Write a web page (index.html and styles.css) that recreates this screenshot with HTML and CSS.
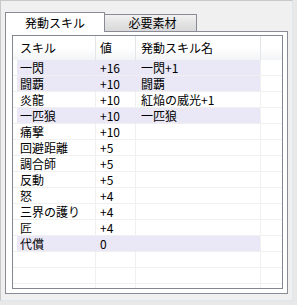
FILE: index.html
```html
<!DOCTYPE html>
<html lang="ja">
<head>
    <meta charset="UTF-8">
    <title>スキル</title>
    <link rel="stylesheet" href="styles.css">
</head>
<body>
    <div class="frame">
        <div class="tabs">
            <div class="tab active">発動スキル</div>
            <div class="tab">必要素材</div>
        </div>
        <div class="panel">
            <div class="list">
                <div class="head">
                    <div class="hc c1">スキル</div>
                    <div class="hc c2">値</div>
                    <div class="hc c3">発動スキル名</div>
                    <div class="hc fill"></div>
                </div>
                <div class="row on"><div class="pad"></div><div class="c c1">一閃</div><div class="c c2">+16</div><div class="c c3">一閃+1</div><div class="c fill"></div></div>
                <div class="row on"><div class="pad"></div><div class="c c1">闘覇</div><div class="c c2">+10</div><div class="c c3">闘覇</div><div class="c fill"></div></div>
                <div class="row"><div class="pad"></div><div class="c c1">炎龍</div><div class="c c2">+10</div><div class="c c3">紅焔の威光+1</div><div class="c fill"></div></div>
                <div class="row on"><div class="pad"></div><div class="c c1">一匹狼</div><div class="c c2">+10</div><div class="c c3">一匹狼</div><div class="c fill"></div></div>
                <div class="row"><div class="pad"></div><div class="c c1">痛撃</div><div class="c c2">+10</div><div class="c c3"></div><div class="c fill"></div></div>
                <div class="row"><div class="pad"></div><div class="c c1">回避距離</div><div class="c c2">+5</div><div class="c c3"></div><div class="c fill"></div></div>
                <div class="row"><div class="pad"></div><div class="c c1">調合師</div><div class="c c2">+5</div><div class="c c3"></div><div class="c fill"></div></div>
                <div class="row"><div class="pad"></div><div class="c c1">反動</div><div class="c c2">+5</div><div class="c c3"></div><div class="c fill"></div></div>
                <div class="row"><div class="pad"></div><div class="c c1">怒</div><div class="c c2">+4</div><div class="c c3"></div><div class="c fill"></div></div>
                <div class="row"><div class="pad"></div><div class="c c1">三界の護り</div><div class="c c2">+4</div><div class="c c3"></div><div class="c fill"></div></div>
                <div class="row"><div class="pad"></div><div class="c c1">匠</div><div class="c c2">+4</div><div class="c c3"></div><div class="c fill"></div></div>
                <div class="row on"><div class="pad"></div><div class="c c1">代償</div><div class="c c2">0</div><div class="c c3"></div><div class="c fill"></div></div>
                <div class="row"><div class="pad"></div><div class="c c1"></div><div class="c c2"></div><div class="c c3"></div><div class="c fill"></div></div>
                <div class="row"><div class="pad"></div><div class="c c1"></div><div class="c c2"></div><div class="c c3"></div><div class="c fill"></div></div>
                <div class="row"><div class="pad"></div><div class="c c1"></div><div class="c c2"></div><div class="c c3"></div><div class="c fill"></div></div>
            </div>
        </div>
    </div>
</body>
</html>
```

FILE: styles.css
```css
body {
    margin: 0;
    background-color: #e8e8e8;
    font-family: "Noto Sans CJK JP", "DejaVu Sans", sans-serif;
    font-size: 12px;
    color: #000;
}
.frame {
    box-sizing: border-box;
    width: 293px;
    height: 301px;
    padding: 11px 0 0 4px;
    background-color: #f0f0f0;
    border-top: 1px solid #c8c8c8;
    border-left: 1px solid #c8c8c8;
    border-right: 1px solid #dfe6ee;
    border-bottom: 1px solid #dfe6ee;
    overflow: hidden;
}
.tabs {
    display: flex;
    align-items: flex-end;
    height: 19px;
}
.tab {
    box-sizing: border-box;
    height: 17px;
    width: 93px;
    margin-left: -1px;
    border: 1px solid #898c95;
    border-bottom: none;
    background: linear-gradient(#f2f2f2, #e3e3e3 50%, #d9d9d9);
    text-align: center;
    line-height: 16px;
    padding-left: 4px;
}
.tab.active {
    position: relative;
    z-index: 1;
    height: 20px;
    width: 100px;
    margin-left: 0;
    margin-bottom: -1px;
    background: #fff;
    line-height: 19px;
    padding-left: 0;
}
.panel {
    box-sizing: border-box;
    width: 283px;
    height: 263px;
    padding: 3px 4px 4px 6px;
    background-color: #fff;
    border: 1px solid #898c95;
}
.list {
    box-sizing: border-box;
    width: 271px;
    height: 254px;
    border: 1px solid #828790;
    overflow: hidden;
}
.head {
    display: flex;
    height: 24px;
    background: linear-gradient(#fff, #fff 50%, #f3f4f6);
}
.hc {
    box-sizing: border-box;
    height: 24px;
    line-height: 24px;
    border-right: 1px solid #e3e5e8;
    white-space: nowrap;
}
.row {
    display: flex;
    height: 16px;
}
.pad {
    width: 4px;
    flex: none;
    border-bottom: 1px solid #f0f0f0;
}
.c {
    box-sizing: border-box;
    height: 16px;
    line-height: 15px;
    border-right: 1px solid #f0f0f0;
    border-bottom: 1px solid #f0f0f0;
    white-space: nowrap;
}
.c1 {
    width: 83px;
    padding-left: 7px;
    flex: none;
}
.c.c1 {
    width: 79px;
    padding-left: 3px;
}
.c2 {
    width: 40px;
    padding-left: 4px;
    flex: none;
}
.c3 {
    width: 125px;
    padding-left: 5px;
    flex: none;
}
.fill {
    flex: 1;
    border-right: none;
}
.row.on .c1,
.row.on .c2,
.row.on .c3 {
    background-color: #eae8f6;
    border-right-color: #eae8f6;
}
.row.on .c3 {
    border-right-color: #f0f0f0;
}
```
